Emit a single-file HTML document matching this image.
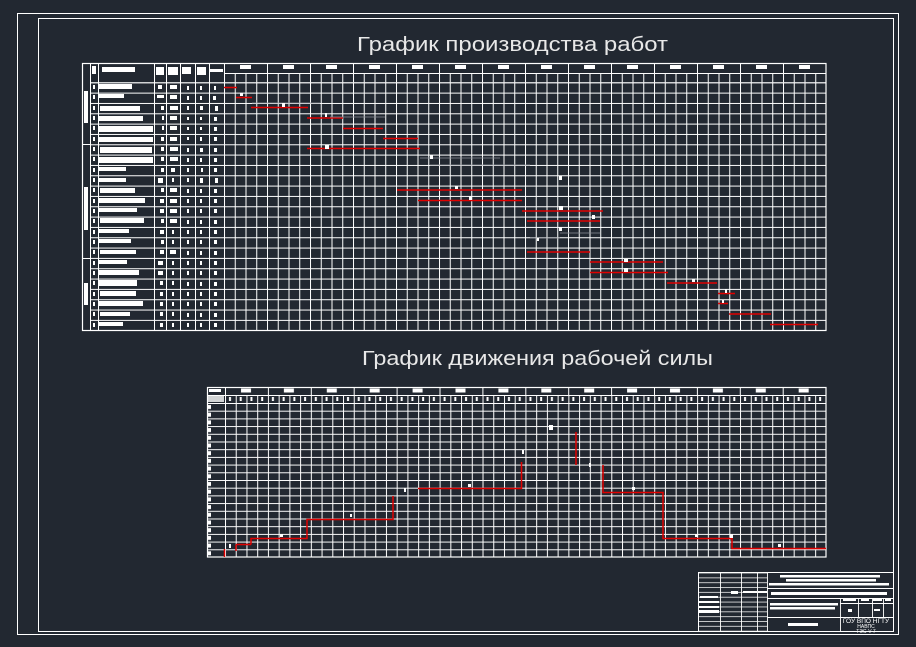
<!DOCTYPE html>
<html><head><meta charset="utf-8"><style>
html,body{margin:0;padding:0;background:#222831;}
svg{display:block;}
</style></head><body>
<svg width="916" height="647" viewBox="0 0 916 647" xmlns="http://www.w3.org/2000/svg">
<defs>
<pattern id="tg" patternUnits="userSpaceOnUse" x="224" y="82.3" width="10.75" height="10.33"><path d="M0.5 0V10.33M0 0.5H10.75" stroke="#fff" stroke-width="1"/></pattern>
<pattern id="tv" patternUnits="userSpaceOnUse" x="224" y="0" width="10.75" height="20"><path d="M0.5 0V20" stroke="#fff"/><rect x="4" y="76" width="2" height="4" fill="#fff"/></pattern>
<pattern id="th" patternUnits="userSpaceOnUse" x="0" y="82.3" width="20" height="10.33"><path d="M0 0.5H20" stroke="#fff"/></pattern>
<pattern id="tgr" patternUnits="userSpaceOnUse" x="224" y="63" width="43" height="10"><path d="M0.5 0V10" stroke="#fff"/><rect x="16" y="2" width="11" height="4" fill="#fff"/></pattern>
<pattern id="bg" patternUnits="userSpaceOnUse" x="225" y="403" width="10.73" height="7.7"><path d="M0.5 0V7.7M0 0.5H10.73" stroke="#fff"/></pattern>
<pattern id="bv" patternUnits="userSpaceOnUse" x="225" y="395" width="10.73" height="8"><path d="M0.5 0V8" stroke="#fff"/><rect x="4" y="2" width="2" height="4" fill="#fff"/></pattern>
<pattern id="bgr" patternUnits="userSpaceOnUse" x="225" y="387" width="42.9" height="8"><path d="M0.5 0V8" stroke="#fff"/><rect x="16" y="1.5" width="10" height="4" fill="#fff"/></pattern>
<pattern id="bh" patternUnits="userSpaceOnUse" x="0" y="403" width="20" height="7.7"><path d="M0 0.5H20" stroke="#fff"/><rect x="8" y="2" width="3" height="4" fill="#fff"/></pattern>
<pattern id="tblh" patternUnits="userSpaceOnUse" x="0" y="572.5" width="20" height="4.85"><path d="M0 0.5H20" stroke="#fff" stroke-width="0.8"/></pattern>
</defs>
<rect width="916" height="647" fill="#222831"/>
<rect x="17.5" y="13.5" width="881" height="621" fill="none" stroke="#fff" stroke-width="1"/>
<rect x="38.5" y="18.5" width="855" height="613" fill="none" stroke="#fff" stroke-width="1"/>

<text x="357" y="51" textLength="311" lengthAdjust="spacingAndGlyphs" font-family="Liberation Sans, sans-serif" font-size="20" fill="#e8e8e8">График производства работ</text>
<text x="362" y="365" textLength="351" lengthAdjust="spacingAndGlyphs" font-family="Liberation Sans, sans-serif" font-size="20" fill="#e8e8e8">График движения рабочей силы</text>

<rect x="224" y="82.3" width="602" height="248" fill="url(#tg)"/>
<rect x="224" y="73" width="602" height="9.3" fill="url(#tv)"/>
<rect x="224" y="63" width="602" height="10" fill="url(#tgr)"/>
<rect x="90" y="82.3" width="134" height="248" fill="url(#th)"/>
<path d="M224 73.5H826M90 82.8H826M90.5 63V330M98.5 63V330M154.5 63V330M166.5 63V330M180.5 63V330M195.5 63V330M209.5 63V330M224.5 63V330M82 144.5H90M82 258.5H90" stroke="#fff" stroke-width="1"/>
<rect x="82.5" y="63.5" width="743.5" height="267" fill="none" stroke="#fff" stroke-width="1.2"/>
<rect x="84" y="91" width="4" height="32" fill="#fff"/>
<rect x="84" y="187" width="4" height="43" fill="#fff"/>
<rect x="84" y="283" width="4" height="22" fill="#fff"/>
<rect x="92" y="66" width="4" height="8" fill="#fff"/>
<rect x="102" y="67" width="33" height="5" fill="#fff"/>
<rect x="156" y="67" width="8" height="8" fill="#fff"/>
<rect x="168" y="67" width="10" height="8" fill="#fff"/>
<rect x="182" y="67" width="9" height="7" fill="#fff"/>
<rect x="197" y="67" width="9" height="8" fill="#fff"/>
<rect x="210" y="69" width="13" height="3" fill="#fff"/>
<g fill="#fff">
<rect x="99" y="84" width="33" height="5"/><rect x="99" y="94" width="25" height="4"/><rect x="100" y="106" width="40" height="5"/><rect x="99" y="116" width="44" height="5"/><rect x="99" y="126" width="54" height="6"/><rect x="99" y="137" width="54" height="5"/>
<rect x="100" y="147" width="52" height="6"/><rect x="99" y="157" width="54" height="6"/><rect x="99" y="167" width="27" height="4"/><rect x="99" y="178" width="27" height="4"/><rect x="100" y="188" width="35" height="5"/><rect x="99" y="198" width="46" height="5"/>
<rect x="99" y="208" width="38" height="4"/><rect x="100" y="218" width="44" height="5"/><rect x="99" y="229" width="30" height="4"/><rect x="99" y="239" width="32" height="4"/><rect x="100" y="250" width="36" height="4"/><rect x="99" y="260" width="28" height="4"/>
<rect x="99" y="270" width="40" height="5"/><rect x="99" y="280" width="38" height="6"/><rect x="100" y="291" width="36" height="5"/><rect x="99" y="301" width="44" height="5"/><rect x="100" y="312" width="30" height="4"/><rect x="99" y="322" width="24" height="4"/>
</g>
<g fill="#fff">
<path d="M93 85h2v4h-2zM93 95h2v4h-2zM93 106h2v4h-2zM93 116h2v4h-2zM93 126h2v4h-2zM93 137h2v4h-2zM93 147h2v4h-2zM93 157h2v4h-2zM93 168h2v4h-2zM93 178h2v4h-2zM93 188h2v4h-2zM93 199h2v4h-2zM93 209h2v4h-2zM93 219h2v4h-2zM93 230h2v4h-2zM93 240h2v4h-2zM93 250h2v4h-2zM93 261h2v4h-2zM93 271h2v4h-2zM93 281h2v4h-2zM93 292h2v4h-2zM93 302h2v4h-2zM93 312h2v4h-2zM93 323h2v4h-2z"/>
<path d="M158 85h4v4h-4zM157 95h7v3h-7zM161 106h3v4h-3zM162 116h2v4h-2zM162 126h2v4h-2zM161 137h3v4h-3zM161 147h3v4h-3zM161 157h3v4h-3zM161 168h3v4h-3zM158 178h5v5h-5zM161 188h3v4h-3zM160 199h4v4h-4zM160 209h4v4h-4zM161 219h3v4h-3zM160 230h4v4h-4zM161 240h3v4h-3zM160 250h4v4h-4zM158 261h5v4h-5zM158 271h5v4h-5zM160 281h3v4h-3zM160 292h3v4h-3zM160 302h3v4h-3zM160 312h3v4h-3zM160 323h3v4h-3z"/>
<path d="M170 85h7v4h-7zM170 95h7v4h-7zM170 106h8v4h-8zM170 116h7v4h-7zM170 126h7v4h-7zM170 137h7v4h-7zM170 147h8v4h-8zM170 157h8v4h-8zM171 168h4v4h-4zM172 178h2v4h-2zM170 188h7v4h-7zM170 199h7v4h-7zM170 209h7v4h-7zM170 219h7v4h-7zM172 230h2v4h-2zM172 240h2v4h-2zM170 250h6v4h-6zM172 261h2v4h-2zM172 271h2v4h-2zM172 281h2v4h-2zM172 292h2v4h-2zM172 302h2v4h-2zM172 312h2v4h-2zM172 323h2v4h-2z"/>
<path d="M187 86h2v4h-2zM187 96h2v4h-2zM187 106h2v4h-2zM187 117h2v3h-2zM187 127h2v3h-2zM187 137h2v3h-2zM187 148h2v4h-2zM187 158h2v4h-2zM187 168h2v4h-2zM187 178h2v4h-2zM187 189h2v4h-2zM187 199h2v4h-2zM187 209h2v4h-2zM187 220h2v4h-2zM187 230h2v4h-2zM187 240h2v4h-2zM187 251h2v4h-2zM187 261h2v4h-2zM187 271h2v4h-2zM187 282h2v4h-2zM187 292h2v4h-2zM187 302h2v4h-2zM187 313h2v4h-2zM187 323h2v4h-2z"/>
<path d="M200 86h2v4h-2zM200 96h2v4h-2zM200 106h3v4h-3zM200 117h2v3h-2zM200 127h2v3h-2zM200 137h2v4h-2zM200 148h3v4h-3zM200 158h2v4h-2zM201 168h2v4h-2zM200 178h3v5h-3zM200 189h2v4h-2zM200 199h2v4h-2zM200 209h2v4h-2zM200 220h2v4h-2zM200 230h2v4h-2zM200 240h2v4h-2zM200 251h2v4h-2zM200 261h2v4h-2zM200 271h2v4h-2zM200 282h2v4h-2zM200 292h2v4h-2zM200 302h2v4h-2zM200 313h2v4h-2zM200 323h2v4h-2z"/>
<path d="M214 86h2v4h-2zM213 96h3v4h-3zM215 106h3v5h-3zM214 117h3v4h-3zM214 127h3v4h-3zM214 137h3v4h-3zM214 148h3v4h-3zM214 158h3v4h-3zM214 168h3v4h-3zM215 178h3v5h-3zM214 189h3v4h-3zM214 199h3v4h-3zM214 209h3v4h-3zM214 220h3v4h-3zM214 230h3v4h-3zM214 240h3v4h-3zM214 251h3v4h-3zM214 261h3v4h-3zM214 271h3v4h-3zM214 282h3v4h-3zM214 292h3v4h-3zM214 302h3v4h-3zM214 313h3v4h-3zM214 323h3v4h-3z"/>
</g>
<g stroke="#e00000" stroke-width="1.5">
<path d="M224 87.5H237M236 97.5H252M251 107.5H308M307 118H343M343 128.5H383M383 138.5H418M307 148.5H420M397 190H522M418 200.5H522M522 211H603M527 221H600M527 252H590M590 262H663M590 272.5H668M667 283H717M718 293.5H735M718 303.5H728M729 314H771M770 324.5H818"/>
</g>
<g stroke="#8a8f96" stroke-width="0.7">
<path d="M252 103H320M330 117H385M420 158H500M430 165H530M530 238H560M560 233H600"/>
</g>
<g fill="#fff">
<rect x="240" y="93" width="3" height="3"/><rect x="282" y="103" width="3" height="4"/><rect x="325" y="113" width="2" height="4"/><rect x="325" y="145" width="4" height="4"/><rect x="430" y="155" width="3" height="4"/><rect x="559" y="176" width="3" height="4"/><rect x="455" y="186" width="3" height="3"/><rect x="469" y="196" width="3" height="4"/><rect x="559" y="206" width="4" height="4"/><rect x="592" y="215" width="3" height="4"/><rect x="559" y="227" width="3" height="4"/><rect x="537" y="238" width="2" height="3"/><rect x="624" y="259" width="4" height="3"/><rect x="624" y="268" width="4" height="4"/><rect x="692" y="279" width="3" height="3"/><rect x="725" y="289" width="2" height="4"/><rect x="722" y="300" width="2" height="3"/>
</g>

<rect x="225" y="403" width="601" height="154" fill="url(#bg)"/>
<rect x="225" y="395" width="601" height="8" fill="url(#bv)"/>
<rect x="225" y="387" width="601" height="8" fill="url(#bgr)"/>
<rect x="207" y="403" width="18" height="154" fill="url(#bh)"/>
<path d="M207 395.5H826M207 403.5H826M225.5 387V557" stroke="#fff"/>
<rect x="207.5" y="387.5" width="618.5" height="169.5" fill="none" stroke="#fff" stroke-width="1.2"/>
<rect x="209" y="389" width="12" height="3" fill="#fff"/>
<rect x="208" y="396" width="16" height="6" fill="#fff" opacity="0.8"/>
<g stroke="#e00000" stroke-width="1.5" fill="none">
<path d="M224.5 557V549M236 544.5V551M236 544.5H251M251 544.5V538.5H307V519.5H393V496"/>
<path d="M418 488.5H521.5V462"/>
<path d="M576 432V465M603 465V492.5H663V538.5H732V548.5H826"/>
</g>
<g fill="#fff">
<rect x="229" y="544" width="2" height="4"/><rect x="280" y="534" width="3" height="3"/><rect x="350" y="514" width="2" height="3"/><rect x="404" y="488" width="2" height="4"/><rect x="468" y="484" width="3" height="3"/><rect x="522" y="450" width="2" height="4"/><rect x="549" y="425" width="4" height="5"/><rect x="589" y="463" width="2" height="4"/><rect x="632" y="487" width="3" height="3"/><rect x="695" y="534" width="3" height="3"/><rect x="730" y="534" width="3" height="4"/><rect x="778" y="544" width="3" height="3"/>
</g>

<rect x="698.5" y="572.5" width="195" height="59" fill="none" stroke="#fff" stroke-width="1"/>
<rect x="698" y="572.5" width="69" height="58.5" fill="url(#tblh)"/>
<path d="M720.5 572V631M741.5 572V631M757.5 572V631M767.5 572V631M767 588.5H893M767 598.5H893M767 617.5H893M840.5 598V631M840 603.5H893M858.5 598V617M872.5 598V617M883.5 598V617" stroke="#fff" stroke-width="0.9"/>
<g fill="#fff">
<rect x="780" y="575" width="100" height="2.5"/><rect x="786" y="579" width="90" height="2.5"/><rect x="769" y="583" width="120" height="2.5"/>
<rect x="771" y="592" width="116" height="3"/>
<rect x="770" y="603" width="68" height="2.5"/><rect x="770" y="607" width="65" height="2.5"/>
<rect x="731" y="591" width="7" height="3"/><rect x="743" y="591" width="14" height="2"/><rect x="758" y="591" width="9" height="2"/>
<rect x="700" y="596" width="18" height="2"/><rect x="699" y="601" width="20" height="2"/><rect x="699" y="606" width="20" height="2"/><rect x="699" y="610" width="20" height="3"/>
<rect x="843" y="599" width="13" height="2"/><rect x="861" y="599" width="8" height="2"/><rect x="873" y="599" width="9" height="2"/><rect x="885" y="599" width="6" height="2"/>
<rect x="848" y="609" width="4" height="3"/><rect x="874" y="609" width="6" height="2"/>
<rect x="788" y="623" width="30" height="3"/>
</g>
<text x="866" y="623" text-anchor="middle" font-family="Liberation Sans, sans-serif" font-size="6.5" fill="#fff">ГОУ ВПО НГТУ</text>
<text x="866" y="628" text-anchor="middle" font-family="Liberation Sans, sans-serif" font-size="5" fill="#fff">НАВПС</text>
<text x="866" y="633" text-anchor="middle" font-family="Liberation Sans, sans-serif" font-size="5" fill="#fff">ТЭС-V-7</text>
</svg>
</body></html>
